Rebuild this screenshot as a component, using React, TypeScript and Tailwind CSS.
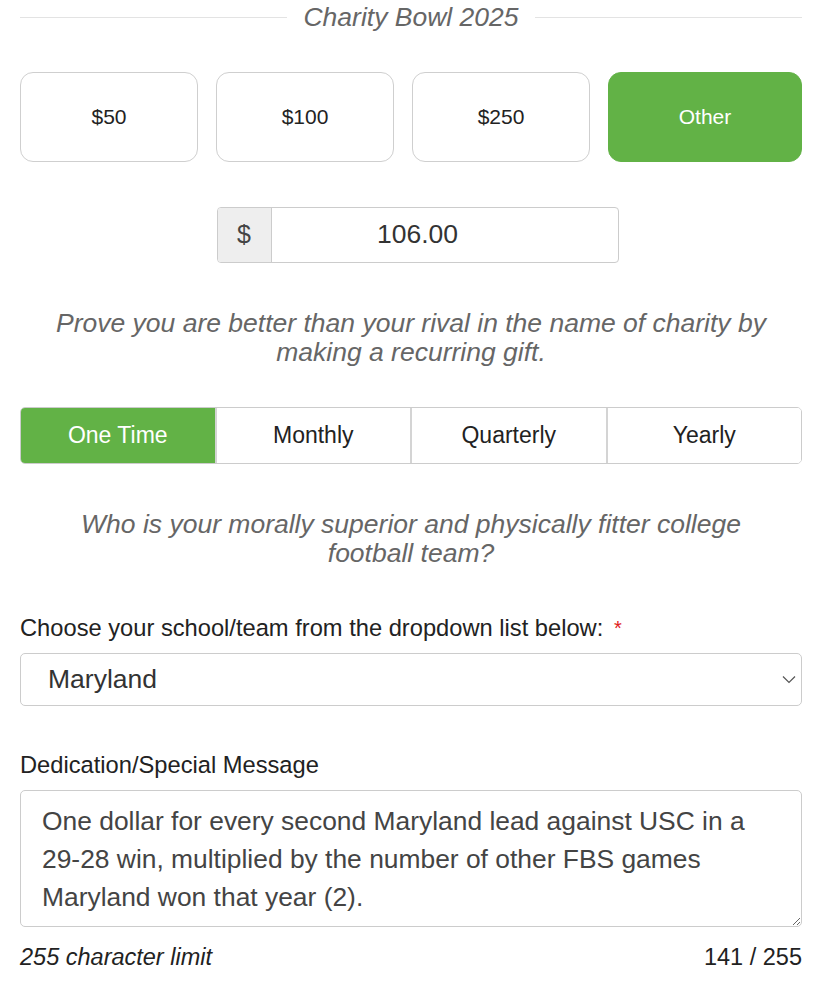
import React, { useState } from 'react';

const amounts = ['$50', '$100', '$250', 'Other'];
const frequencies = ['One Time', 'Monthly', 'Quarterly', 'Yearly'];

const message =
  'One dollar for every second Maryland lead against USC in a 29-28 win, multiplied by the number of other FBS games Maryland won that year (2).';

export default function App() {
  const [amount, setAmount] = useState('Other');
  const [freq, setFreq] = useState('One Time');
  const [custom, setCustom] = useState('106.00');
  const [team, setTeam] = useState('Maryland');
  const [note, setNote] = useState(message);

  return (
    <div className="bg-white min-h-[1000px] pl-5 pr-[13px] text-[#333] font-['Liberation_Sans',Arial,sans-serif]">
      {/* Heading */}
      <div className="flex items-center gap-4 h-[34px]">
        <div className="flex-1 h-px bg-[#e3e3e3]" />
        <h2 className="italic text-[26.5px] text-[#666] leading-none">Charity Bowl 2025</h2>
        <div className="flex-1 h-px bg-[#e3e3e3]" />
      </div>

      {/* Amount buttons */}
      <div className="flex gap-[18px] mt-[38px]">
        {amounts.map((a, i) => (
          <button
            key={a}
            onClick={() => setAmount(a)}
            className={`h-[90px] rounded-[13px] text-[21px] ${i === 3 ? 'flex-1' : 'w-[178px]'} ${
              amount === a
                ? 'bg-[#62b246] text-white border border-[#62b246]'
                : 'bg-white text-[#222] border border-[#cfcfcf]'
            }`}
          >
            {a}
          </button>
        ))}
      </div>

      {/* Custom amount */}
      <div className="flex justify-center mt-[45px] pl-[13px]">
        <div className="flex w-[402px] h-[56px] border border-[#ccc] rounded-[4px] overflow-hidden">
          <span className="w-[54px] flex items-center justify-center bg-[#eee] border-r border-[#ccc] text-[25px] text-[#444]">
            $
          </span>
          <input
            value={custom}
            onChange={e => setCustom(e.target.value)}
            className="flex-1 min-w-0 pr-[54px] text-center text-[26.5px] text-[#333] outline-none"
          />
        </div>
      </div>

      <p className="mt-[46px] text-center italic text-[26.5px] leading-[29px] text-[#666] px-8">
        Prove you are better than your rival in the name of charity by making a recurring gift.
      </p>

      {/* Frequency */}
      <div className="mt-[40px] flex h-[57px] border border-[#ccc] rounded-[5px] overflow-hidden">
        {frequencies.map((f, i) => (
          <button
            key={f}
            onClick={() => setFreq(f)}
            className={`flex-1 text-[23px] ${i > 0 ? 'border-l-2 border-[#d4d4d4]' : ''} ${
              freq === f ? 'bg-[#62b246] text-white' : 'bg-white text-[#222]'
            }`}
          >
            {f}
          </button>
        ))}
      </div>

      <p className="mt-[46px] text-center italic text-[26.5px] leading-[29px] text-[#666] px-8">
        Who is your morally superior and physically fitter college football team?
      </p>

      {/* Team select */}
      <label className="block mt-[46px] text-[23.7px] leading-[28px] text-[#222]">
        Choose your school/team from the dropdown list below:{' '}
        <span className="text-[#e0201b] align-top text-[20px] ml-1">*</span>
      </label>
      <div className="relative mt-[11px]">
        <select
          value={team}
          onChange={e => setTeam(e.target.value)}
          className="w-full h-[53px] appearance-none border border-[#ccc] rounded-[5px] bg-white pl-[27px] text-[26.5px] text-[#333] outline-none"
        >
          <option>Maryland</option>
          <option>USC</option>
          <option>Ohio State</option>
        </select>
        <svg
          className="absolute right-[6px] top-[20px] pointer-events-none"
          width="14"
          height="12"
          viewBox="0 0 14 12"
          fill="none"
          stroke="#555"
          strokeWidth="1.2"
        >
          <path d="M1 3.5l6 6 6-6" />
        </svg>
      </div>

      {/* Message */}
      <label className="block mt-[45px] text-[23.7px] leading-[28px] text-[#222]">
        Dedication/Special Message
      </label>
      <textarea
        value={note}
        onChange={e => setNote(e.target.value)}
        maxLength={255}
        className="mt-[11px] block w-full h-[137px] border border-[#ccc] rounded-[5px] pl-[21px] pr-[32px] pt-[11px] text-[26.4px] leading-[38px] text-[#444] outline-none resize-y"
      />
      <div className="flex justify-between mt-[16px] text-[23.5px] leading-[28px] text-[#222]">
        <span className="italic">255 character limit</span>
        <span>{note.length} / 255</span>
      </div>
    </div>
  );
}
